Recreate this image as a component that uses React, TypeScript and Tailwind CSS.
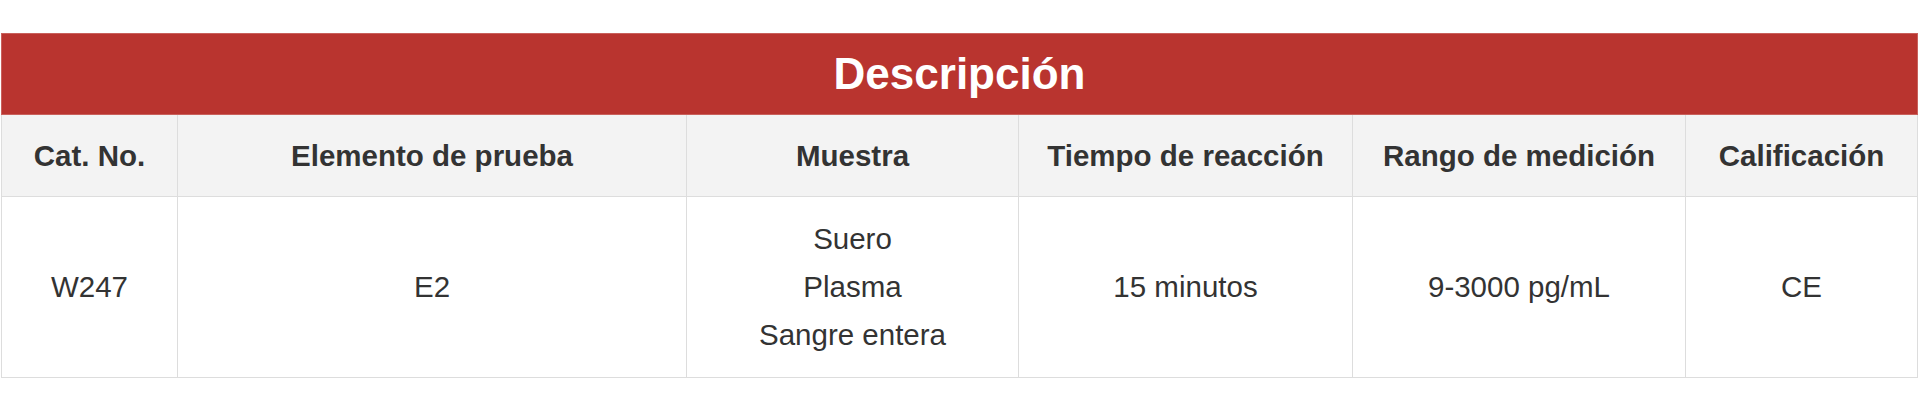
import React from "react";

const cols = [176, 509, 332, 334, 333, 232];

export default function App() {
  const headers = [
    "Cat. No.",
    "Elemento de prueba",
    "Muestra",
    "Tiempo de reacción",
    "Rango de medición",
    "Calificación",
  ];
  return (
    <div className="w-[1920px] h-[409px] bg-white pt-[33px] pl-[1px]" style={{ fontFamily: '"Liberation Sans", Arial, sans-serif' }}>
      <table className="table-fixed border-collapse w-[1917px] text-[#333333]">
        <colgroup>
          {cols.map((w, i) => (
            <col key={i} style={{ width: w }} />
          ))}
        </colgroup>
        <thead>
          <tr className="h-[81px]">
            <th colSpan={6} className="bg-[#b9342f] border border-[#c9605b] text-white text-[44px] font-bold text-center leading-[48px] p-0">
              Descripción
            </th>
          </tr>
          <tr className="h-[82px] bg-[#f3f3f3]">
            {headers.map((h) => (
              <th key={h} className="border border-[#dddddd] text-[29.5px] font-bold text-center leading-[48px] p-0 whitespace-nowrap">
                {h}
              </th>
            ))}
          </tr>
        </thead>
        <tbody>
          <tr className="h-[181px] bg-white">
            <td className="border border-[#dddddd] text-[29.5px] text-center leading-[48px] p-0">W247</td>
            <td className="border border-[#dddddd] text-[29.5px] text-center leading-[48px] p-0">E2</td>
            <td className="border border-[#dddddd] text-[29.5px] text-center leading-[48px] p-0">
              <div>Suero</div>
              <div>Plasma</div>
              <div>Sangre entera</div>
            </td>
            <td className="border border-[#dddddd] text-[29.5px] text-center leading-[48px] p-0">15 minutos</td>
            <td className="border border-[#dddddd] text-[29.5px] text-center leading-[48px] p-0">9-3000 pg/mL</td>
            <td className="border border-[#dddddd] text-[29.5px] text-center leading-[48px] p-0">CE</td>
          </tr>
        </tbody>
      </table>
    </div>
  );
}
